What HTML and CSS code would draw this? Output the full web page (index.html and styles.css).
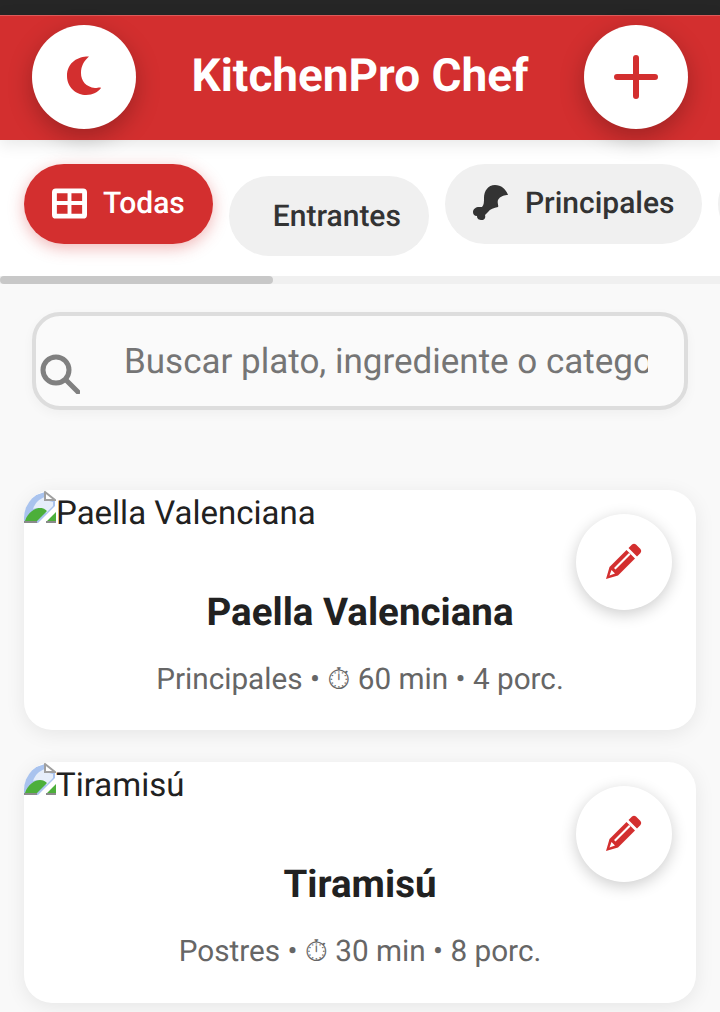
FILE: index.html
```html
<!DOCTYPE html>
<html lang="es">
  <head>
    <meta charset="UTF-8" />
    <meta name="viewport" content="width=device-width, initial-scale=1.0" />
    <title>KitchenPro Chef</title>
    <link rel="stylesheet" href="styles.css">
  </head>
  <body>
    <div class="status-bar"></div>

    <!-- Header -->
    <header class="app-header">
      <button class="round-btn" type="button" aria-label="Modo oscuro">
        <svg class="icon-moon" viewBox="0 0 34 39"><path d="M22 0.5C13 0 0 5 0 20C0 32 10 39 19 39C26 39 31 36 34 32C33 31 31 32 28 32C19 31 14 25 14 17C14 10 17 5 22 0.5Z"/></svg>
      </button>
      <h1>KitchenPro Chef</h1>
      <button class="round-btn" type="button" aria-label="Nuevo plato">
        <svg class="icon-plus" viewBox="0 0 44 44"><path d="M22 3V41M3 22H41"/></svg>
      </button>
    </header>

    <!-- Categories -->
    <nav class="tabs">
      <div class="tab-row">
        <button class="chip chip-active" type="button">
          <svg class="chip-icon chip-icon-grid" viewBox="0 0 36 31"><path fill-rule="evenodd" d="M4 0H32Q36 0 36 4V27Q36 31 32 31H4Q0 31 0 27V4Q0 0 4 0ZM5 5V13H16V5ZM20 5V13H31V5ZM5 17V26H16V17ZM20 17V26H31V17Z"/></svg>
          Todas
        </button>
        <button class="chip chip-plain" type="button">Entrantes</button>
        <button class="chip" type="button">
          <svg class="chip-icon" viewBox="0 0 36 36"><path d="M35 10C32 10 27 11 25 15C24 18 26 21 25 22C21 23 17 24 15 27L12 30C13 33 11 35 9 35C6 35 4 34 4 31C1 31 0 29 0 27C0 24 3 22 6 22L9 22C11 20 11 17 11 13C11 6 15 0 22 0C28 0 33 4 35 10Z"/></svg>
          Principales
        </button>
        <button class="chip chip-next" type="button" aria-label="Postres"></button>
      </div>
      <div class="scroll-track"><div class="scroll-thumb"></div></div>
    </nav>

    <main class="content">
      <!-- Search -->
      <div class="search">
        <input class="search-input" type="text" placeholder="Buscar plato, ingrediente o categoría" />
        <svg class="search-icon" viewBox="0 0 40 40"><circle cx="16" cy="16" r="13"/><path d="M26 26L38 38"/></svg>
      </div>

      <!-- Dishes -->
      <article class="card">
        <div class="card-img">
          <svg class="broken-img" viewBox="0 0 32 33"><path class="bi-sky" d="M0 31V14L12 5L21 2L31 10V16L14 33H0Z"/><path class="bi-light" d="M9 19C11 13 15 9 21 7L25 11L29 12V16L22 23C20 20 14 17 9 19Z"/><path class="bi-hill" d="M1 31C4 22 11 18 16 18C19 18 21 19 23 21L13 31ZM23 31L32 22V31Z"/><path class="bi-fold" d="M21 2L31 10H21Z"/><path class="bi-base" d="M0 32H13M22 32H32"/></svg>
          Paella Valenciana
        </div>
        <button class="edit-btn" type="button" aria-label="Editar">
          <svg class="icon-pencil" viewBox="0 0 36 36"><path fill-rule="evenodd" d="M26 1.5Q28 0 30 1.500L34.500 6Q36 8 34.500 10L31 13.500L22.500 5ZM20.500 7L29 15.500L12 32.500L0 36L3.500 24ZM23 10L8 25L9.500 26.500L24.500 11.500ZM5.500 27L3.500 32.500L9 30.500L6.500 28Z"/></svg>
        </button>
        <h2>Paella Valenciana</h2>
        <p class="meta">Principales • ⏱ 60 min • 4 porc.</p>
      </article>

      <article class="card">
        <div class="card-img">
          <svg class="broken-img" viewBox="0 0 32 33"><path class="bi-sky" d="M0 31V14L12 5L21 2L31 10V16L14 33H0Z"/><path class="bi-light" d="M9 19C11 13 15 9 21 7L25 11L29 12V16L22 23C20 20 14 17 9 19Z"/><path class="bi-hill" d="M1 31C4 22 11 18 16 18C19 18 21 19 23 21L13 31ZM23 31L32 22V31Z"/><path class="bi-fold" d="M21 2L31 10H21Z"/><path class="bi-base" d="M0 32H13M22 32H32"/></svg>
          Tiramisú
        </div>
        <button class="edit-btn" type="button" aria-label="Editar">
          <svg class="icon-pencil" viewBox="0 0 36 36"><path fill-rule="evenodd" d="M26 1.5Q28 0 30 1.500L34.500 6Q36 8 34.500 10L31 13.500L22.500 5ZM20.500 7L29 15.500L12 32.500L0 36L3.500 24ZM23 10L8 25L9.500 26.500L24.500 11.500ZM5.500 27L3.500 32.500L9 30.500L6.500 28Z"/></svg>
        </button>
        <h2>Tiramisú</h2>
        <p class="meta">Postres • ⏱ 30 min • 8 porc.</p>
      </article>
    </main>
  </body>
</html>
```

FILE: styles.css
```css
/* General Styles */
html,
body {
  height: 100%;
  overflow: hidden;
}

body {
  font-family: "Roboto", "Liberation Sans", sans-serif;
  text-rendering: geometricPrecision;
  background: #f9f9f9;
  margin: 0;
  padding: 0;
  color: #212121;
}

button {
  font-family: inherit;
  text-rendering: inherit;
  border: none;
  cursor: pointer;
}

.status-bar {
  height: 15px;
  background: #262626;
}

/* Header */
.app-header {
  position: relative;
  z-index: 1;
  display: flex;
  align-items: center;
  justify-content: space-between;
  box-sizing: border-box;
  height: 125px;
  padding: 0 32px 2px;
  background: #d32f2f;
  border-top: 1px solid #dc5a5a;
  box-shadow: 0 4px 16px rgba(0, 0, 0, 0.1);
}

.app-header h1 {
  margin: 0 0 3px;
  font-size: 45.9px;
  font-weight: 700;
  color: #fff;
}

.round-btn {
  display: flex;
  align-items: center;
  justify-content: center;
  width: 104px;
  height: 104px;
  padding: 0;
  border-radius: 50%;
  background: #fff;
  box-shadow: 0 8px 24px rgba(0, 0, 0, 0.25);
}

.icon-moon {
  width: 34px;
  height: 39px;
  margin-bottom: 3px;
  fill: #d32f2f;
}

.icon-plus {
  width: 44px;
  height: 44px;
  fill: none;
  stroke: #d32f2f;
  stroke-width: 6;
  stroke-linecap: round;
}

/* Categories */
.tabs {
  background: #fff;
  overflow: hidden;
}

.tab-row {
  display: flex;
  align-items: flex-start;
  gap: 16px;
  height: 136px;
  box-sizing: border-box;
  padding: 24px 24px 0;
  white-space: nowrap;
}

.chip {
  display: flex;
  flex: none;
  align-items: center;
  gap: 16px;
  height: 80px;
  padding: 0 28px 2px;
  border-radius: 40px;
  background: #f0f0f0;
  color: #333;
  font-size: 30px;
  font-weight: 500;
}

.chip-active {
  background: #d32f2f;
  color: #fff;
  box-shadow: 0 4px 16px rgba(211, 47, 47, 0.35);
}

.chip-plain {
  margin-top: 12px;
  padding: 0 28px 0 44px;
}

/* only the left edge of this one is on screen */
.chip-next {
  width: 180px;
}

.chip-icon {
  width: 36px;
  height: 36px;
  fill: currentColor;
}

.chip-icon-grid {
  width: 35px;
  height: 31px;
}

.scroll-track {
  height: 8px;
  background: #f0f0f0;
}

.scroll-thumb {
  width: 273px;
  height: 8px;
  border-radius: 4px;
  background: #c8c8c8;
}

/* Search */
.content {
  padding: 28px 24px 0;
}

.search {
  position: relative;
  margin: 0 8px 80px;
}

.search-input {
  display: block;
  width: 100%;
  height: 98px;
  box-sizing: border-box;
  padding: 0 36px 0 88px;
  border: 4px solid #ddd;
  border-radius: 28px;
  background: #fafafa;
  font-family: inherit;
  font-size: 35px;
  text-rendering: inherit;
  color: #212121;
  box-shadow: 0 4px 12px rgba(0, 0, 0, 0.04);
}

.search-input::placeholder {
  color: #757575;
  opacity: 1;
}

.search-icon {
  position: absolute;
  left: 8px;
  top: 42px;
  width: 40px;
  height: 40px;
  fill: none;
  stroke: #808080;
  stroke-width: 5;
  stroke-linecap: round;
}

/* Dish cards */
.card {
  position: relative;
  height: 240.3px;
  margin-bottom: 32px;
  border-radius: 28px;
  background: #fff;
  overflow: hidden;
  text-align: center;
  box-shadow: 0 4px 20px rgba(0, 0, 0, 0.08);
}

.card-img {
  display: flex;
  align-items: flex-start;
  height: 80px;
  font-size: 33px;
  line-height: 48px;
  color: #212121;
}

.broken-img {
  flex: none;
  width: 32px;
  height: 33px;
}

.bi-sky {
  fill: #a9c3ee;
}

.bi-light {
  fill: #e6eefa;
}

.bi-hill {
  fill: #4caf3a;
}

.bi-fold {
  fill: #fff;
  stroke: #a0a0a0;
  stroke-width: 2;
}

.bi-base {
  fill: none;
  stroke: #8a8a8a;
  stroke-width: 2;
}

.card h2 {
  margin: 20px 0 0;
  font-size: 38.5px;
  font-weight: 700;
  color: #212121;
}

.meta {
  margin: 27px 0 0;
  font-size: 29.7px;
  color: #666;
}

.edit-btn {
  position: absolute;
  top: 24px;
  right: 24px;
  display: flex;
  align-items: center;
  justify-content: center;
  width: 96px;
  height: 96px;
  padding: 0;
  border-radius: 50%;
  background: #fff;
  box-shadow: 0 4px 16px rgba(0, 0, 0, 0.2);
}

.icon-pencil {
  width: 36px;
  height: 36px;
  margin-bottom: 3px;
  fill: #d32f2f;
}
```
